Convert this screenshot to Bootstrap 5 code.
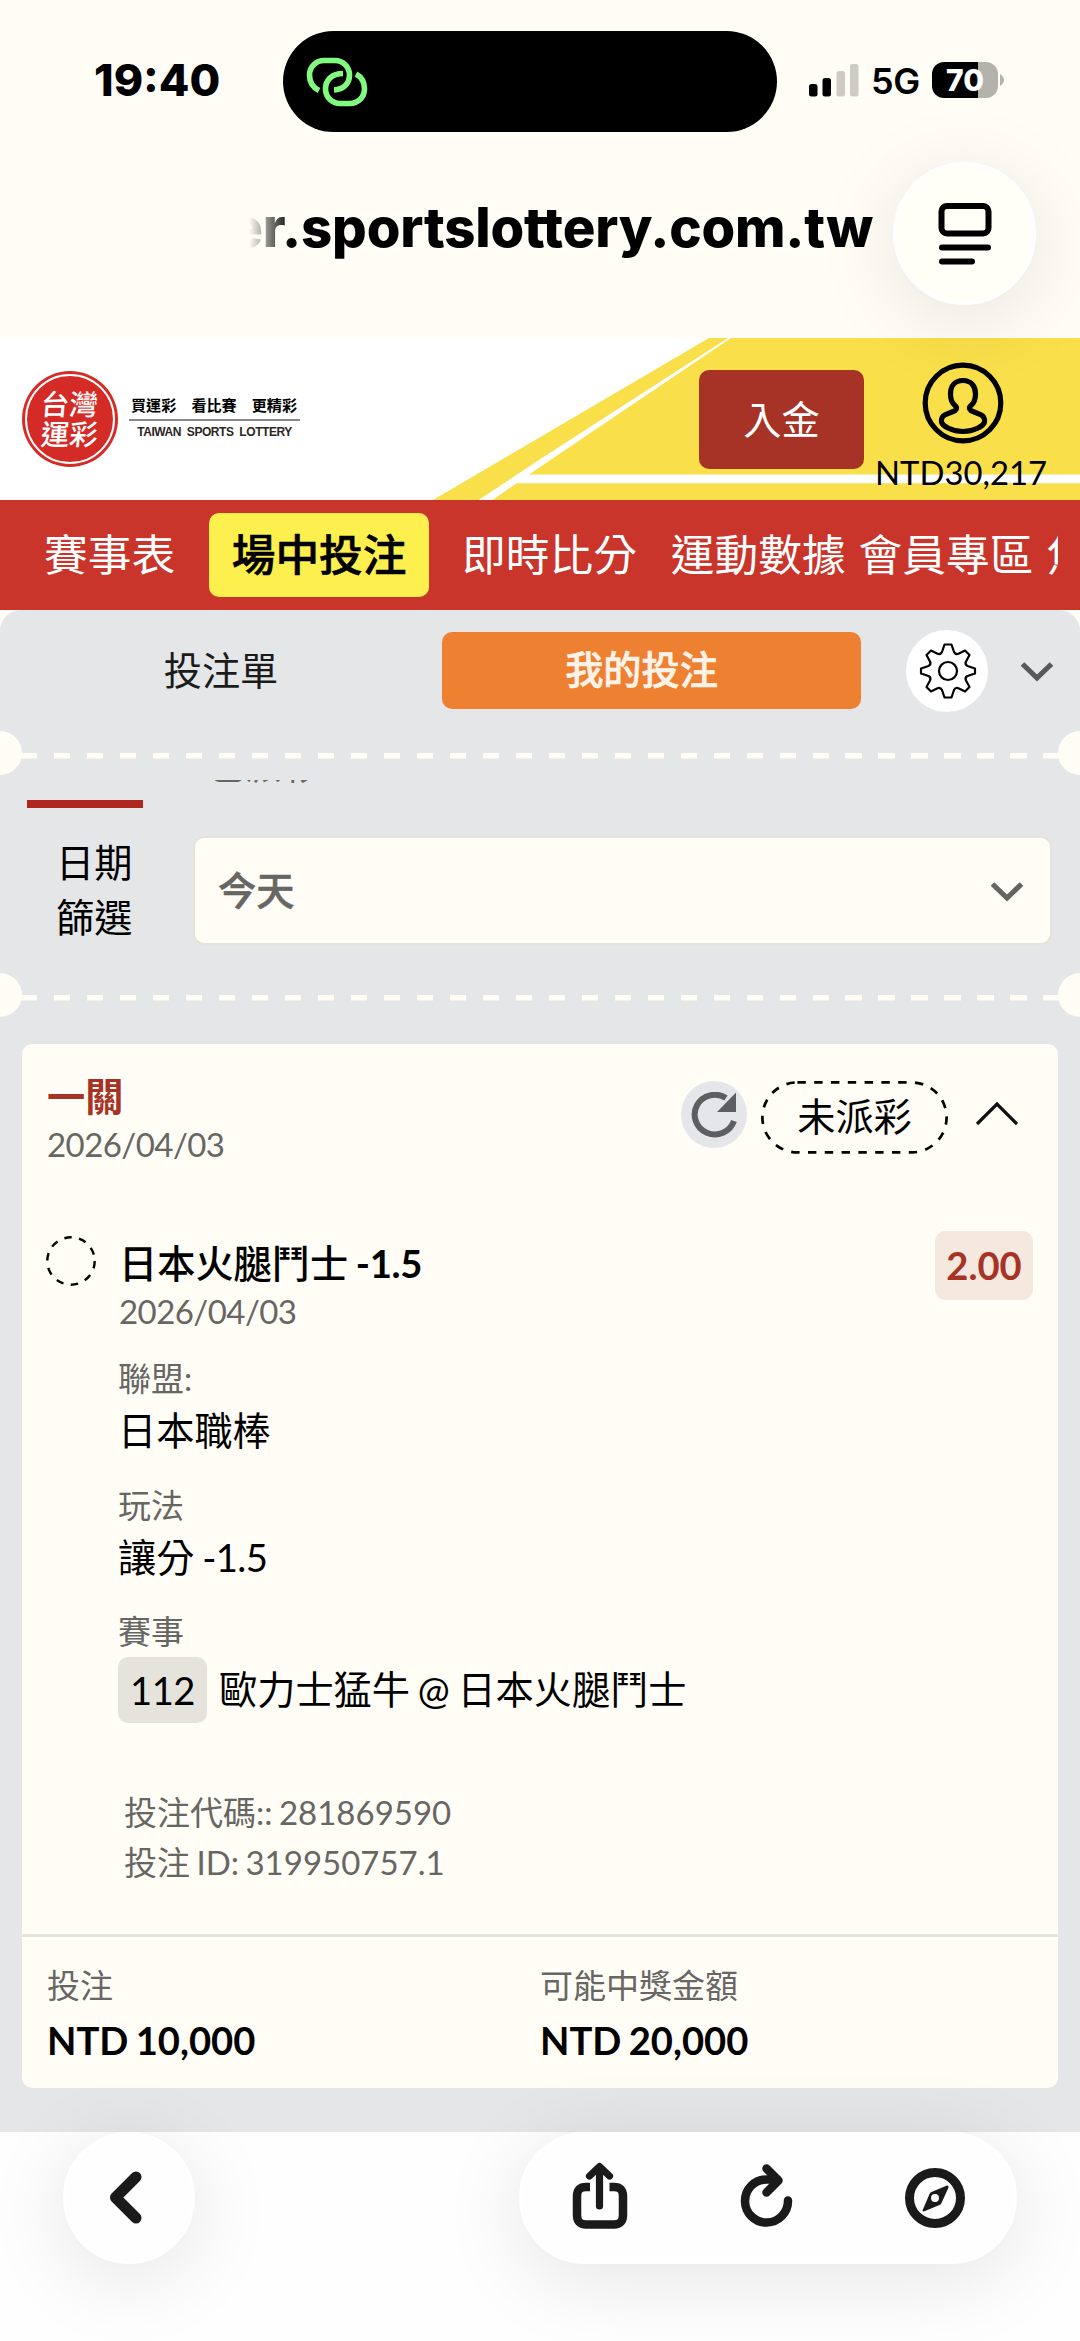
<!DOCTYPE html>
<html lang="zh-Hant">
<head>
<meta charset="utf-8">
<meta name="viewport" content="width=device-width, initial-scale=1">
<title>台灣運彩</title>
<link rel="stylesheet" href="https://cdn.jsdelivr.net/npm/bootstrap@5.3.0/dist/css/bootstrap.min.css">
<style>
  :root { --cream:#fffdf6; --panel:#e4e6e8; --brand:#a63325; --grey:#676663; }
  body { width:1080px; height:2341px; overflow:hidden; margin:0; background:var(--cream); color:#000;
    font-family:Lato,"Noto Sans CJK TC",sans-serif; font-size:38.2px; line-height:50px; word-spacing:-2px; }
  svg { display:block; flex:none; }
  .ui { font-family:Inter,"Noto Sans CJK TC",sans-serif; word-spacing:0; }

  .statusbar { height:132px; padding:31px 76px 0 94px; }
  .clock { width:189px; height:100px; font-size:44.5px; font-weight:800; line-height:98px; }
  .island { width:494px; height:101px; border-radius:51px; background:#000; padding-left:22px; }
  .net { font-size:36px; font-weight:600; line-height:101px; margin:0 1px 0 12px; letter-spacing:-.3px; }
  .batt { width:66px; height:36px; border-radius:12px; color:#fff; font-size:30px; font-weight:800; line-height:36px;
    background:linear-gradient(90deg,#000 46px,#b3b2ac 46px); margin-left:11px; }
  .addressbar { height:206px; padding:30px 44px 0 249px; }
  .host { width:624px; height:143px; line-height:130px; font-size:54.5px; font-weight:800; letter-spacing:-.2px; white-space:nowrap;
    -webkit-mask-image:linear-gradient(90deg,transparent,#000 42px); mask-image:linear-gradient(90deg,transparent,#000 42px); }
  .glass { border:3px solid #fff; border-radius:66px; background:#fefefe; box-shadow:0 14px 84px rgba(0,0,0,.1); position:relative; z-index:3; }
  .pagebtn { width:143px; height:143px; border-radius:50%; background:#fffff8; }

  .masthead { height:162px; background:#fff; padding-left:22px; }
  .court { position:absolute; inset:0; }
  .seal { width:96px; height:96px; border-radius:50%; background:#d52b26; padding:3px; }
  .seal-in { border:2px solid #fff; border-radius:50%; font-size:28.5px; line-height:30px; font-weight:500; color:#fff; }
  .seal-in span { transform:skewX(-5deg); }
  .slogan { width:171px; margin-left:11px; }
  .slogan-zh { font-size:15.1px; line-height:22px; font-weight:700; border-bottom:2px solid #888; padding:0 0 3px 2px; white-space:pre; margin-top:-2px; }
  .slogan-en { font:700 12px/20px "Liberation Sans",Arial,sans-serif; color:#2d2523; word-spacing:3px; letter-spacing:-.45px; padding-top:1px; }
  .deposit { width:165px; height:99px; border-radius:10px; background:var(--brand); color:#fff; font-size:38.2px; line-height:96px; margin-left:399px; border:0; }
  .wallet { width:176px; margin-left:9px; padding-top:24px; align-self:flex-start; }
  .wallet-sum { font-size:32.8px; line-height:40px; margin-top:9px; }

  .mainnav { height:110px; background:#c9352b; padding:0 22px; }
  .mainnav .nav { overflow:hidden; }
  .mainnav .nav-link { color:#fff; font-size:43.7px; line-height:82px; height:84px; padding:0; font-weight:400; white-space:nowrap; flex:none; }
  .mainnav .nav-link.active { background:#fdf04e; color:#000; border-radius:10px; width:220px; font-weight:500; text-align:center; }
  .firm { -webkit-text-stroke:.6px currentColor; }

  .slip { background:var(--panel); border-radius:21px 21px 0 0; height:1522px; }
  .tabs-row { height:121px; padding:0 26px 0 0; }
  .tab-a { width:442px; text-align:center; color:#1b1b1b; line-height:48px; margin-top:-2px; }
  .tab-b { width:419px; height:77px; line-height:75px; border-radius:10px; background:#ee8031; color:#fff3e8; font-weight:500; text-align:center; padding-right:20px; }
  .gear { width:82px; height:82px; border-radius:50%; background:#fff; margin-left:45px; }
  .perf { height:44px; position:relative; overflow:hidden;
    background:repeating-linear-gradient(90deg,var(--cream) 0 16.5px,transparent 16.5px 32.98px) 20.6px 22px/100% 5.5px no-repeat; }
  .perf::before,.perf::after { content:""; position:absolute; top:0; width:44px; height:44px; border-radius:50%; background:var(--cream); }
  .perf::before { left:-22px; } .perf::after { right:-22px; }
  .filter { height:198px; padding-top:5px; }
  .scrolled { height:19.5px; overflow:hidden; }
  .scrolled div { margin-top:-31px; line-height:34px; font-size:36px; color:var(--grey); padding-left:209px; }
  .redbar { width:116px; height:8.5px; margin-left:27px; background:#ad2720; }
  .filter-label { width:193px; flex:none; line-height:55px; padding-left:56px; margin-top:-2px; }
  .picker { width:859px; flex:none; height:109px; border:2px solid #e6e3da; border-radius:11px; background:var(--cream); color:var(--grey);
    font-weight:500; padding:0 26px 2px 23px; }

  .bet { margin:27px 22px 0; height:1044px; border:0; border-radius:10px; background:var(--cream); padding-top:27px; color:#000; }
  .sub { font-size:33px; color:var(--grey); }
  .day { letter-spacing:-.55px; }
  .h40 { line-height:40px; } .h45 { line-height:47px; } .h46 { line-height:46px; }
  .kind { color:var(--brand); font-weight:700; }
  .renew { width:66px; height:67px; border-radius:50%; background:#e4e6e9; }
  .pending { width:187px; height:73px; line-height:70px; }
  .pick { font-weight:500; }
  .pick b { font-weight:700; letter-spacing:-.3px; }
  .odds { width:98px; height:69px; line-height:69px; border-radius:10px; background:#f5e8df; color:var(--brand); font-weight:700; text-align:center; }
  .eventno { width:89px; height:66px; line-height:66px; border-radius:10px; background:#e6e3dd; text-align:center; letter-spacing:-.5px; }
  .bet-foot { margin-top:47px; border-top:3px solid #e6e2dc; padding:28px 24px 0 25px; }
  .bet-foot > div { width:493px; }
  .sum { font-weight:700; margin-top:10px; }

  .toolbar { height:209px; background:#fefefe; padding:0 63px; }
  .backbtn { width:132px; height:132px; padding-right:6px; }
  .actions { width:498px; height:132px; padding:0 49px 4px 50px; }
</style>
<script src="https://cdn.jsdelivr.net/npm/bootstrap@5.3.0/dist/js/bootstrap.bundle.min.js"></script>
</head>
<body>
<header class="ui">
  <div class="statusbar d-flex">
    <div class="clock">19:40</div>
    <div class="island d-flex align-items-center">
      <svg width="64" height="52" viewBox="0 0 64 52" fill="none" stroke="#80fa7f" stroke-width="5.6">
        <path d="M14 34.5C8 31.500 4.500 25.500 4.500 19C4.500 11 11 4.500 19 4.500H30C38 4.500 44.500 11 44.500 19C44.500 27.500 38.500 33.500 29 34"/>
        <path d="M38 17.500C27 17.500 20.500 24 20.500 33C20.500 41 27 47.500 35 47.500H45C53 47.500 59.500 41 59.500 33C59.500 26.500 56.500 21 51 18"/>
      </svg>
    </div>
    <svg class="ms-auto" width="50" height="101" viewBox="0 0 50 101">
      <rect x="0" y="53" width="8.500" height="12.500" rx="2.500"/><rect x="13.500" y="47" width="8.500" height="18.500" rx="2.500"/>
      <g fill="#cccbc5"><rect x="27.500" y="40" width="8.500" height="25.500" rx="2.500"/><rect x="41" y="33" width="8.500" height="32.500" rx="2.500"/></g>
    </svg>
    <div class="net">5G</div>
    <div class="d-flex align-items-center" style="height:98px">
      <div class="batt text-center">70</div>
      <svg width="6" height="12" viewBox="0 0 6 12"><path d="M2 0Q10 6 2 12Z" fill="#b3b2ac"/></svg>
    </div>
  </div>
  <div class="addressbar d-flex justify-content-between">
    <div class="host d-flex justify-content-end"><span>er.sportslottery.com.tw</span></div>
    <div class="glass pagebtn d-flex align-items-center justify-content-center">
      <svg width="54" height="64" viewBox="0 0 54 64" fill="none" stroke="#000" stroke-width="6" stroke-linecap="round">
        <rect x="3.500" y="4" width="47" height="27.500" rx="5.500"/><path d="M4 45.500H50M4 59.500H34"/>
      </svg>
    </div>
  </div>
</header>

<section class="masthead position-relative">
  <svg class="court" width="1080" height="162" viewBox="0 0 1080 162">
    <path d="M709 0H1080V162H433Z" fill="#f9df4a"/>
    <path d="M728 0H731L540 129L492.500 162H478.500L540 121.300Z" fill="#fff"/>
    <path d="M527 136.500H1080V145.300H514Z" fill="#fff"/>
  </svg>
  <div class="position-relative d-flex align-items-center h-100">
    <div class="seal d-flex"><div class="seal-in w-100 d-flex flex-column align-items-center justify-content-center"><span>台灣</span><span>運彩</span></div></div>
    <div class="slogan">
      <div class="slogan-zh">買運彩　看比賽　更精彩</div>
      <div class="slogan-en text-center text-nowrap">TAIWAN SPORTS LOTTERY</div>
    </div>
    <button class="deposit p-0" type="button">入金</button>
    <div class="wallet d-flex flex-column align-items-center">
      <svg width="82" height="82" viewBox="0 0 82 82" fill="none" stroke="#000" stroke-width="5.200" style="margin-left:3px">
        <circle cx="41" cy="41" r="37.800"/>
        <path d="M41 18.500C33 18.500 28.500 24 28.500 32C28.500 37 30 41 33 43.500C36 46 34 48.500 31 49.500L23.500 52.500C19.500 54.500 19 57 19.500 60C20.500 64 30 69.500 41 69.500C52 69.500 61.500 64 62.500 60C63 57 62.500 54.500 58.500 52.500L51 49.500C48 48.500 46 46 49 43.500C52 41 53.500 37 53.500 32C53.500 24 49 18.500 41 18.500Z"/>
      </svg>
      <div class="wallet-sum">NTD30,217</div>
    </div>
  </div>
</section>

<nav class="mainnav d-flex align-items-center">
  <div class="nav flex-nowrap w-100">
    <a class="nav-link" style="margin:0 34px 0 22px">賽事表</a>
    <a class="nav-link active firm">場中投注</a>
    <a class="nav-link" style="margin-left:33px">即時比分</a>
    <a class="nav-link" style="margin-left:34px">運動數據</a>
    <a class="nav-link" style="margin-left:13px">會員專區</a>
    <a class="nav-link" style="margin-left:13px">焦</a>
  </div>
</nav>

<main class="slip">
  <div class="tabs-row d-flex align-items-center">
    <div class="tab-a">投注單</div>
    <div class="tab-b firm">我的投注</div>
    <div class="gear d-flex align-items-center justify-content-center">
      <svg width="58" height="58" viewBox="-29 -29 58 58" fill="none" stroke="#000" stroke-width="2.200" stroke-linejoin="round" style="margin-left:2px">
        <circle r="9"/>
        <path d="M-3.500-26.500H3.500L6-19C7-17 9-16.500 11-17.500L17-20.500L21.500-16L18-9.500C17-7.500 17.500-6 19.500-5L27-2.500V2.500L19.500 5C17.500 6 17 7.500 18 9.500L21.500 16L17 20.500L11 17.500C9 16.500 7 17 6 19L3.500 26.500H-3.500L-6 19C-7 17-9 16.500-11 17.500L-17 20.500L-21.500 16L-18 9.500C-17 7.500-17.500 6-19.500 5L-27 2.500V-2.500L-19.500-5C-17.500-6-17-7.500-18-9.500L-21.500-16L-17-20.500L-11-17.500C-9-16.500-7-17-6-19Z"/>
      </svg>
    </div>
    <svg class="ms-auto" width="34" height="20" viewBox="0 0 34 20" style="margin-top:3px"><path d="M2.500 2L17 16L31.500 2" fill="none" stroke="#58595b" stroke-width="5.200"/></svg>
  </div>
  <div class="perf"></div>
  <div class="filter">
    <div class="scrolled"><div>已派彩</div></div>
    <div class="redbar"></div>
    <div class="d-flex align-items-center" style="padding-top:28px">
      <div class="filter-label">日期<br>篩選</div>
      <div class="picker d-flex align-items-center justify-content-between">
        <span class="firm">今天</span>
        <svg width="34" height="20" viewBox="0 0 34 20" style="margin-top:5px"><path d="M2.500 2L17 16L31.500 2" fill="none" stroke="#656461" stroke-width="5.200"/></svg>
      </div>
    </div>
  </div>
  <div class="perf"></div>

  <article class="bet card">
    <div class="d-flex align-items-start" style="padding:0 39px 0 25px">
      <div class="flex-grow-1">
        <div class="kind">一關</div>
        <div class="sub day h45">2026/04/03</div>
      </div>
      <div class="renew d-flex align-items-center justify-content-center" style="margin-top:10px">
        <svg width="46" height="46" viewBox="0 0 46 46"><path d="M43 29A20.200 19.800 0 1 1 35 6" fill="none" stroke="#5d5e5f" stroke-width="6"/><path d="M45 .5V20H26Z" fill="#5d5e5f"/></svg>
      </div>
      <div class="pending position-relative d-flex align-items-center justify-content-center" style="margin:10px 27px 0 14px">
        <svg class="position-absolute top-0 start-0" width="187" height="73" viewBox="0 0 187 73" fill="none" stroke="#000" stroke-width="2.700"><rect x="1.400" y="1.400" width="184.200" height="70" rx="35" stroke-dasharray="8.400 8.400"/></svg>
        <span class="pb-1">未派彩</span>
      </div>
      <svg width="44" height="26" viewBox="0 0 44 26" style="margin-top:29px"><path d="M2 24L22 4L42 24" fill="none" stroke="#111" stroke-width="3.200"/></svg>
    </div>

    <div class="d-flex align-items-start" style="padding:63px 25px 0 23px">
      <svg width="52" height="52" viewBox="0 0 52 52" style="margin:4px 22px 0 0"><circle cx="26" cy="26" r="23.700" fill="none" stroke="#000" stroke-width="2.400" stroke-dasharray="7.450 7.440"/></svg>
      <div class="flex-grow-1" style="margin-top:7px">
        <div class="pick">日本火腿鬥士 <b>-1.5</b></div>
        <div class="sub day h46">2026/04/03</div>
      </div>
      <div class="odds">2.00</div>
    </div>

    <div style="padding:24px 0 0 96px">
      <div class="sub h40">聯盟:</div>
      <div style="margin-top:7px">日本職棒</div>
      <div class="sub h40" style="margin-top:30px">玩法</div>
      <div style="margin-top:7px">讓分 <span style="letter-spacing:-.6px">-1.5</span></div>
      <div class="sub h40" style="margin-top:29px">賽事</div>
      <div class="d-flex align-items-center" style="margin-top:6px">
        <div class="eventno">112</div><div style="margin:-2px 0 0 12px">歐力士猛牛 @ 日本火腿鬥士</div>
      </div>
      <div class="sub" style="padding:64px 0 0 6px">
        <div>投注代碼:: 281869590</div>
        <div>投注 ID: 319950757.1</div>
      </div>
    </div>

    <div class="bet-foot d-flex">
      <div><div class="sub h40">投注</div><div class="sum">NTD 10,000</div></div>
      <div><div class="sub h40">可能中獎金額</div><div class="sum">NTD 20,000</div></div>
    </div>
  </article>
</main>

<footer class="toolbar d-flex justify-content-between align-items-start">
  <div class="glass backbtn d-flex align-items-center justify-content-center">
    <svg width="40" height="60" viewBox="0 0 40 60" fill="none" stroke="#1a1a1a" stroke-width="11" stroke-linecap="round" stroke-linejoin="round"><path d="M30 9L9.500 29.500L30 50"/></svg>
  </div>
  <div class="glass actions d-flex align-items-center justify-content-between">
    <svg width="56" height="70" viewBox="0 0 56 70" fill="none" stroke="#1a1a1a" stroke-width="8.500">
      <path d="M18 26H14Q5 26 5 35V54Q5 63.500 14 63.500H42Q51 63.500 51 54V35Q51 26 42 26H37.500"/>
      <path d="M27.500 45V8M17.500 15L27.500 5.500L37.500 15" stroke-width="7.200" stroke-linecap="round" stroke-linejoin="round"/>
    </svg>
    <svg width="56" height="70" viewBox="0 0 56 70" fill="none" stroke="#1a1a1a" stroke-width="8.500" stroke-linecap="round" stroke-linejoin="round">
      <path d="M49 39.500A21.500 21.500 0 1 1 27.500 18.500H38"/><path d="M27.500 7.500L39.500 19.500L27.500 31.500"/>
    </svg>
    <svg width="60" height="70" viewBox="0 0 60 70">
      <circle cx="30" cy="37" r="25.500" fill="none" stroke="#1a1a1a" stroke-width="9"/>
      <path d="M42 24.500L26.500 31Q25 31.500 24.500 33L17.500 49.500Q18.500 51 20 50L34.500 44Q36 43.500 36.500 42L43.500 26.500Q43.500 24 42 24.500Z" fill="#1a1a1a"/>
      <circle cx="30" cy="37" r="4" fill="#fefefe"/>
    </svg>
  </div>
</footer>
</body>
</html>
